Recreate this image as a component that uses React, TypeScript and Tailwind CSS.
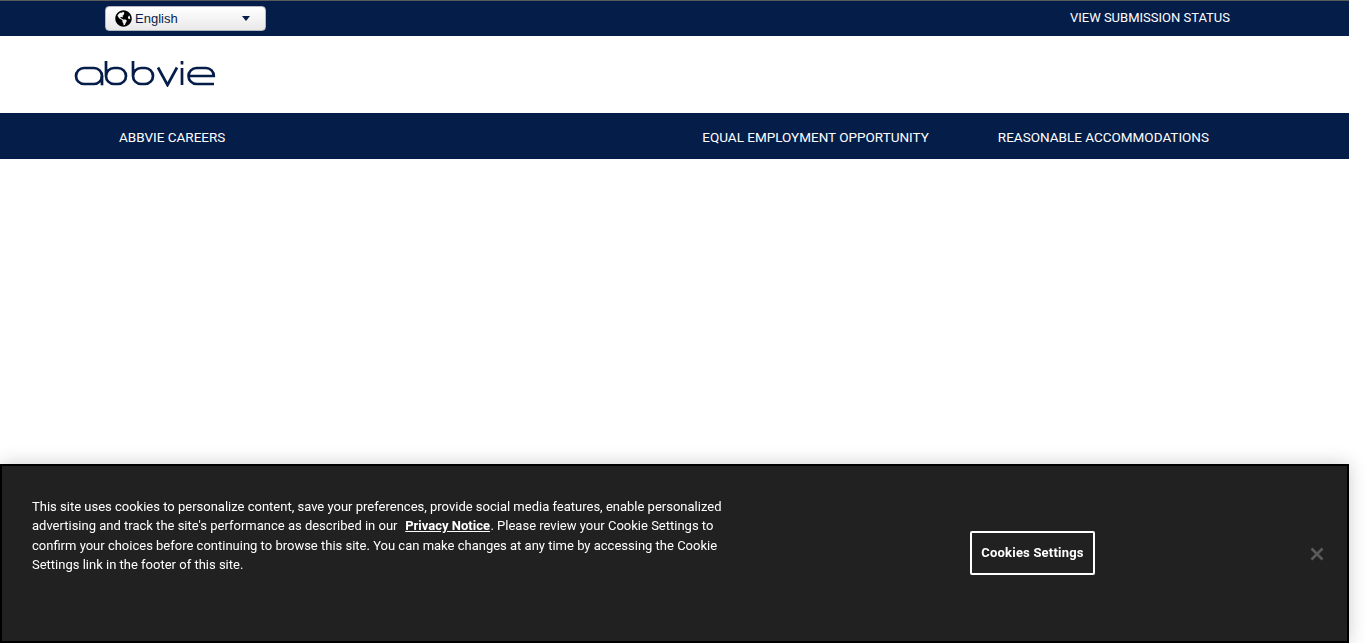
import { FaGlobeAmericas } from 'react-icons/fa';

function AbbvieLogo() {
  return (
    <svg className="mb-[1px]" width="142" height="26" viewBox="0 0 142 26" fill="none" stroke="#071d49" strokeWidth="2.7">
      <rect x="2" y="7" width="26" height="16" rx="8" />
      <path d="M28 15v9.300" />
      <path d="M32 0v15a8 8 0 0 0 8 8h4a8 8 0 0 0 0-16h-4a8 8 0 0 0-8 8" />
      <path d="M59 0v15a8 8 0 0 0 8 8h4a8 8 0 0 0 0-16h-4a8 8 0 0 0-8 8" />
      <path d="M84 6.500l9.500 17.500 9.500-17.500" />
      <path d="M108 7v17" />
      <path d="M108 0v3.500" />
      <path d="M140 23h-17.500a8 8 0 0 1 0-16h9.500a7.800 7.800 0 0 1 7.800 8h-25" />
    </svg>
  );
}

function LanguageSelect() {
  return (
    <div className="flex h-[25px] w-[161px] items-center rounded-[4px] border border-[#b5b8c0] bg-gradient-to-b from-white to-[#e9e9e9] pl-[9px] pr-[15px] font-['Liberation_Sans',sans-serif] text-[13px] text-[#071d49]">
      <FaGlobeAmericas className="h-[17px] w-[17px] text-black" />
      <span className="ml-[3px]">English</span>
      <span className="ml-auto h-0 w-0 border-x-[4.5px] border-t-[5px] border-x-transparent border-t-[#071d49]" />
    </div>
  );
}

export default function App() {
  return (
    <div className="relative h-[643px] w-full overflow-hidden bg-white font-['Roboto',sans-serif]">
      <div className="w-[1349px]">
        <div className="flex h-[36px] items-center border-t border-[#5a5a5a] bg-[#051d49] pl-[105px] pr-[119px] text-[13px] text-white">
          <LanguageSelect />
          <span className="ml-auto mb-[2px]">VIEW SUBMISSION STATUS</span>
        </div>
        <div className="flex h-[77px] items-center pl-[74px]">
          <AbbvieLogo />
        </div>
        <nav className="flex h-[46px] items-center bg-[#051d49] pl-[119px] pr-[140px] pt-[2px] text-[13.500px] text-white">
          <span>ABBVIE CAREERS</span>
          <div className="ml-auto flex gap-[69px]">
            <span>EQUAL EMPLOYMENT OPPORTUNITY</span>
            <span>REASONABLE ACCOMMODATIONS</span>
          </div>
        </nav>
      </div>

      <div className="fixed bottom-0 left-0 flex h-[179px] w-[1349px] items-center border-2 border-black bg-[#212121] shadow-[0_0_18px_rgba(0,0,0,0.2)]">
        <p className="ml-[30px] mt-[30.500px] w-[700px] self-start text-[13px] leading-[19.500px] text-white">
          This site uses cookies to personalize content, save your preferences, provide social media features, enable personalized
          <br />
          advertising and track the site's performance as described in our{' '}
          <a className="ml-[4.500px] mr-[0.500px] font-bold underline">Privacy Notice</a>. Please review your Cookie Settings to
          <br />
          confirm your choices before continuing to browse this site. You can make changes at any time by accessing the Cookie
          <br />
          Settings link in the footer of this site.
        </p>
        <button className="ml-[238px] mb-[1px] flex h-[44px] w-[125px] items-center justify-center rounded-[2px] border-2 border-white text-[13px] font-bold tracking-[0.2px] text-white">
          Cookies Settings
        </button>
        <svg className="ml-[215px]" width="14" height="14" viewBox="0 0 14 14" stroke="#5a5a5a" strokeWidth="2.600">
          <path d="M1.500 1.500l11 11M12.500 1.500l-11 11" />
        </svg>
      </div>
    </div>
  );
}
